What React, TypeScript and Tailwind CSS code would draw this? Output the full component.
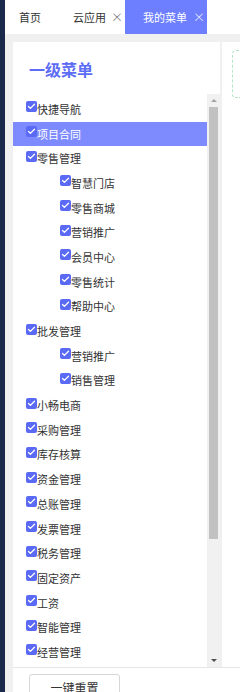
import { Check } from "lucide-react";

type Item = { label: string; level: 1 | 2; active?: boolean };

const items: Item[] = [
  { label: "快捷导航", level: 1 },
  { label: "项目合同", level: 1, active: true },
  { label: "零售管理", level: 1 },
  { label: "智慧门店", level: 2 },
  { label: "零售商城", level: 2 },
  { label: "营销推广", level: 2 },
  { label: "会员中心", level: 2 },
  { label: "零售统计", level: 2 },
  { label: "帮助中心", level: 2 },
  { label: "批发管理", level: 1 },
  { label: "营销推广", level: 2 },
  { label: "销售管理", level: 2 },
  { label: "小畅电商", level: 1 },
  { label: "采购管理", level: 1 },
  { label: "库存核算", level: 1 },
  { label: "资金管理", level: 1 },
  { label: "总账管理", level: 1 },
  { label: "发票管理", level: 1 },
  { label: "税务管理", level: 1 },
  { label: "固定资产", level: 1 },
  { label: "工资", level: 1 },
  { label: "智能管理", level: 1 },
  { label: "经营管理", level: 1 },
];

function TreeRow({ item }: { item: Item }) {
  return (
    <div
      className={`flex h-[24.7px] shrink-0 items-center ${item.level === 1 ? "pl-[13px]" : "pl-[47px]"} ${
        item.active ? "bg-[#7d8bff] text-white" : "text-[#333]"
      }`}
    >
      <span className="mt-[-5px] flex h-[11px] w-[11px] items-center justify-center rounded-[2px] bg-[#5b6af5]">
        <Check size={9} strokeWidth={3.5} className="text-white" />
      </span>
      <span className="leading-none">{item.label}</span>
    </div>
  );
}

export default function App() {
  return (
    <div
      className="flex h-[692px] w-[240px] overflow-hidden bg-[#f0f0f0]"
      style={{ fontFamily: '"Noto Sans CJK SC", "Noto Sans", sans-serif' }}
    >
      <div className="w-[5px] shrink-0 bg-[#1b2a4b]" />

      <div className="flex min-w-0 flex-1 flex-col">
        {/* tabs */}
        <div className="flex h-[34px] shrink-0 items-stretch bg-white text-[11px]">
          <div className="flex w-[52px] items-center pl-[14px] text-[#333]">首页</div>
          <div className="flex w-[68px] items-center pl-[16px] text-[#333]">
            云应用
            <span className="ml-[5px] text-[12px] font-light text-[#555]">×</span>
          </div>
          <div className="flex w-[82px] items-center bg-[#6d7fff] pl-[18px] text-white">
            我的菜单
            <span className="ml-[6px] text-[12px] font-light">×</span>
          </div>
        </div>

        {/* content */}
        <div className="flex min-h-0 flex-1 flex-col pl-[8px] pt-[8px]">
          <div className="flex min-h-0 flex-1">
            <div className="flex w-[207px] shrink-0 flex-col bg-white">
              <div className="h-[52px] shrink-0 pl-[16px] pt-[17px] text-[16px] font-bold leading-[20px] text-[#5c6cf5]">
                一级菜单
              </div>
              <div className="flex min-h-0 flex-1">
                <div className="flex min-w-0 flex-1 flex-col overflow-hidden pt-[3px] text-[11px]">
                  {items.map((it, i) => (
                    <TreeRow key={i} item={it} />
                  ))}
                </div>
                <div className="flex w-[13px] shrink-0 flex-col bg-[#f1f1f1]">
                  <div className="flex h-[13px] items-center justify-center">
                    <span className="h-0 w-0 border-x-[3px] border-b-[3px] border-x-transparent border-b-[#a3a3a3]" />
                  </div>
                  <div className="mx-[2px] h-[432px] bg-[#c1c1c1]" />
                  <div className="flex-1" />
                  <div className="flex h-[13px] items-center justify-center">
                    <span className="h-0 w-0 border-x-[3px] border-t-[3px] border-x-transparent border-t-[#505050]" />
                  </div>
                </div>
              </div>
            </div>
            <div className="ml-[2px] flex-1 bg-white pl-[10px] pt-[8px]">
              <div className="h-[48px] rounded-l-[4px] border border-r-0 border-dashed border-[#b2e6c6]" />
            </div>
          </div>

          {/* footer */}
          <div className="h-[25px] shrink-0 border-t border-[#e6e6e6] bg-white pl-[16px] pt-[6px]">
            <button className="flex h-[28px] w-[91px] items-center justify-center rounded-[3px] border border-[#d6d6d6] bg-white text-[12px] text-[#333]">
              一键重置
            </button>
          </div>
        </div>
      </div>
    </div>
  );
}
